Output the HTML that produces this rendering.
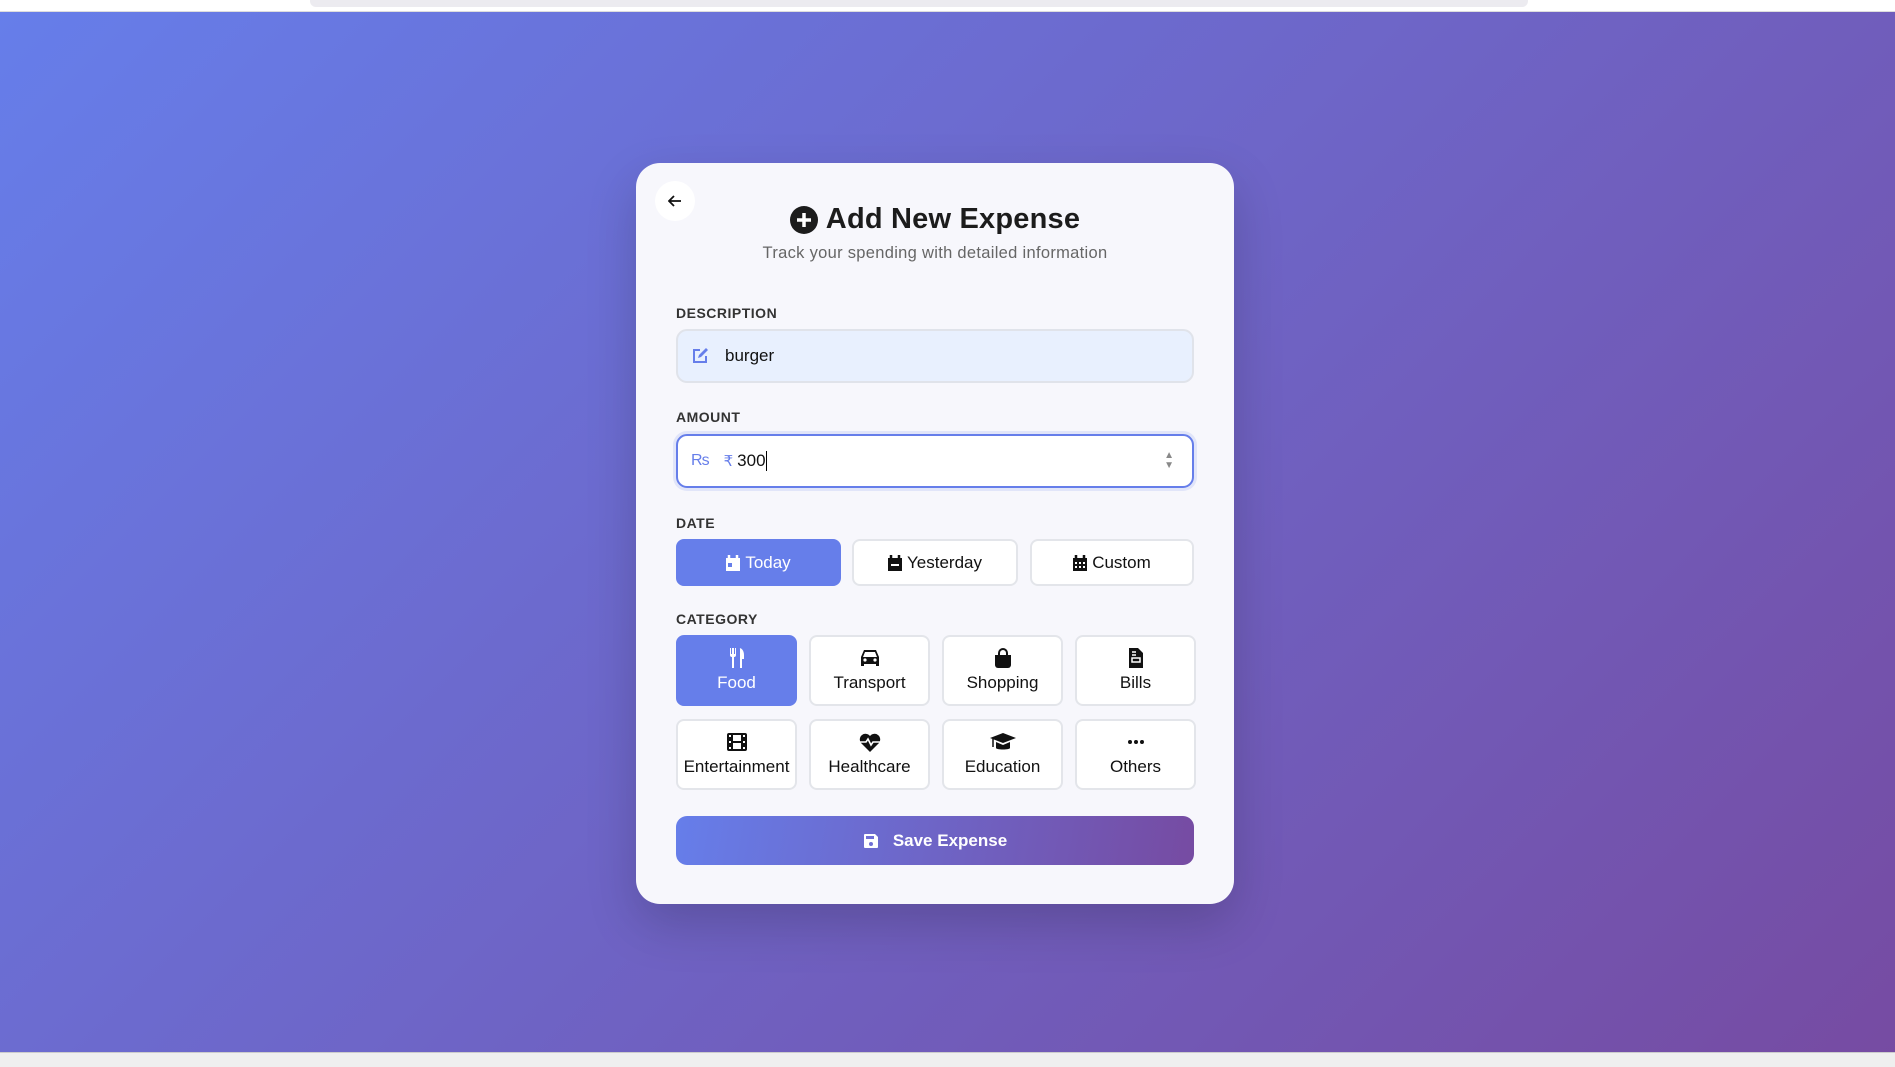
<!DOCTYPE html>
<html><head><meta charset="utf-8"><style>
*{box-sizing:border-box;margin:0;padding:0}
body{width:1895px;height:1067px;overflow:hidden;font-family:"Liberation Sans",sans-serif;background:linear-gradient(135deg,#667eea 0%,#764ba2 100%);position:relative}
.top{position:absolute;left:0;top:0;width:1895px;height:12px;background:#fff;border-bottom:1px solid #ddd}
.top div{position:absolute;left:310px;top:0;width:1218px;height:7px;background:#ecebf0;border-radius:0 0 6px 6px}
.task{position:absolute;left:0;top:1052px;width:1895px;height:15px;background:#efefef;border-top:1px solid #ccc}
.card{position:absolute;left:636px;top:163px;width:598px;height:741px;background:#f7f7fc;border-radius:24px;box-shadow:0 20px 50px rgba(0,0,0,.18)}
.back{position:absolute;left:19px;top:18px;width:40px;height:40px;border-radius:50%;background:#fff;display:flex;align-items:center;justify-content:center}
h1{position:absolute;left:0;right:0;top:40px;text-align:center;font-size:29px;font-weight:700;color:#1c1c1c;display:flex;justify-content:center;align-items:center;gap:8px;letter-spacing:.2px}
.sub{position:absolute;left:0;right:0;top:81px;text-align:center;font-size:16.5px;color:#666;letter-spacing:.3px}
.lbl{position:absolute;left:40px;font-size:14px;font-weight:700;color:#333;letter-spacing:.5px}
.inp{position:absolute;left:40px;width:518px;height:54px;border-radius:11px;display:flex;align-items:center;font-size:17px;color:#111}
.btn{position:absolute;height:47px;border-radius:8px;background:#fff;border:2px solid #e3e5ea;display:flex;align-items:center;justify-content:center;gap:5px;font-size:17px;color:#111}
.tile{position:absolute;width:121px;height:71px;border-radius:8px;background:#fff;border:2px solid #e3e5ea;display:flex;flex-direction:column;align-items:center;justify-content:center;gap:5px;font-size:17px;color:#111}
.card .on{background:#667eea;border-color:#667eea;color:#fff}
.tile svg{height:20px}
.save{position:absolute;left:40px;top:653px;width:518px;height:49px;border-radius:11px;background:linear-gradient(100deg,#667eea,#764ba2);color:#fff;font-weight:700;font-size:17px;display:flex;align-items:center;justify-content:center;gap:14px}
</style></head><body>
<div class="top"><div></div></div>
<div class="card">
<div class="back"><svg width="14" height="12" viewBox="0 0 14 12"><path d="M13 6H2M6 1L1 6l5 5" stroke="#111" stroke-width="1.8" fill="none"/></svg></div>
<h1><svg width="28" height="28" viewBox="0 0 28 28"><circle cx="14" cy="14" r="14" fill="#1c1c1c"/><path d="M14 7v14M7 14h14" stroke="#fff" stroke-width="3.5"/></svg>Add New Expense</h1>
<div class="sub">Track your spending with detailed information</div>
<div class="lbl" style="top:142px">DESCRIPTION</div>
<div class="inp" style="top:166px;background:#e8f0fe;border:2px solid #e0e3ea;padding-left:13px">
<svg width="18" height="18" viewBox="0 0 18 18"><path d="M9 3H3v12h12V9" stroke="#667eea" stroke-width="2" fill="none"/><path d="M7 11l1-3 7-7 2 2-7 7z" fill="#667eea"/></svg><span style="margin-left:16px">burger</span></div>
<div class="lbl" style="top:246px">AMOUNT</div>
<div class="inp" style="top:271px;background:#fff;border:2px solid #667eea;box-shadow:0 0 0 3px rgba(102,126,234,.15);padding-left:13px">
<span style="color:#667eea;font-size:16px">₨</span><span style="color:#667eea;margin-left:14px;font-size:15px">₹</span><span style="margin-left:4px">300</span><span style="border-left:1px solid #000;height:20px"></span>
<span style="position:absolute;right:18px;top:15px;font-size:10px;color:#888;line-height:10px">▲<br>▼</span></div>
<div class="lbl" style="top:352px">DATE</div>
<div class="btn on" style="left:40px;top:376px;width:165px"><svg width="14" height="16" viewBox="0 0 14 16"><path d="M0 3h14v13H0z" fill="#fff"/><path d="M3 0v4M11 0v4" stroke="#fff" stroke-width="2.5"/><rect x="2" y="8" width="4" height="4" fill="#667eea"/></svg>Today</div>
<div class="btn" style="left:216px;top:376px;width:166px"><svg width="14" height="16" viewBox="0 0 14 16"><path d="M0 3h14v13H0z" fill="#111"/><path d="M3 0v4M11 0v4" stroke="#111" stroke-width="2.5"/><rect x="3" y="9" width="8" height="2" fill="#fff"/></svg>Yesterday</div>
<div class="btn" style="left:394px;top:376px;width:164px"><svg width="14" height="16" viewBox="0 0 14 16"><path d="M0 3h14v13H0z" fill="#111"/><path d="M3 0v4M11 0v4" stroke="#111" stroke-width="2.5"/><path d="M2 7h2v2H2zM6 7h2v2H6zM10 7h2v2h-2zM2 11h2v2H2zM6 11h2v2H6zM10 11h2v2h-2z" fill="#fff"/></svg>Custom</div>
<div class="lbl" style="top:448px">CATEGORY</div>
<div class="tile on" style="left:40px;top:472px"><svg viewBox="0 0 16 20" width="16"><path d="M1 0v7a2 2 0 002 2v11h2V9a2 2 0 002-2V0H6v6H5V0H3v6H2V0z M10 0c3 0 5 3 5 7v4h-2v9h-2V0z" fill="#fff"/></svg>Food</div>
<div class="tile" style="left:173px;top:472px"><svg viewBox="0 0 22 20" width="22"><path d="M5 2h12l3 7v9h-3v-2H5v2H2V9z" fill="#111"/><path d="M6 4h10l2 5H4z" fill="#fff"/><circle cx="6" cy="12" r="1.6" fill="#fff"/><circle cx="16" cy="12" r="1.6" fill="#fff"/></svg>Transport</div>
<div class="tile" style="left:306px;top:472px"><svg viewBox="0 0 18 20" width="18"><path d="M5 7V5a4 4 0 018 0v2" stroke="#111" stroke-width="2" fill="none"/><path d="M1 7h16v10a3 3 0 01-3 3H4a3 3 0 01-3-3z" fill="#111"/></svg>Shopping</div>
<div class="tile" style="left:439px;top:472px"><svg viewBox="0 0 16 20" width="16"><path d="M1 0h9l5 5v15H1z" fill="#111"/><path d="M4 4h4M4 7h4" stroke="#fff" stroke-width="1.5"/><rect x="4" y="10" width="8" height="4" stroke="#fff" stroke-width="1.5" fill="none"/></svg>Bills</div>
<div class="tile" style="left:40px;top:556px"><svg viewBox="0 0 20 20" width="20"><rect x="0" y="1" width="20" height="18" rx="2" fill="#111"/><path d="M2 3h2v2H2zM2 9h2v2H2zM2 15h2v2H2zM16 3h2v2h-2zM16 9h2v2h-2zM16 15h2v2h-2zM6 3h8v6H6zM6 11h8v6H6z" fill="#fff"/></svg>Entertainment</div>
<div class="tile" style="left:173px;top:556px"><svg viewBox="0 0 22 20" width="22"><path d="M11 20L2 11A5.5 5.5 0 0111 4a5.5 5.5 0 019 7z" fill="#111"/><path d="M1 10h6l2-3 3 6 2-3h7" stroke="#fff" stroke-width="1.6" fill="none"/></svg>Healthcare</div>
<div class="tile" style="left:306px;top:556px"><svg viewBox="0 0 26 20" width="26"><path d="M13 1L0 6l13 5 13-5z" fill="#111"/><path d="M6 10v6c0 2 14 2 14 0v-6l-7 3z" fill="#111"/><path d="M3 7v8" stroke="#111" stroke-width="1.5"/></svg>Education</div>
<div class="tile" style="left:439px;top:556px"><svg viewBox="0 0 18 20" width="18"><circle cx="3" cy="10" r="2" fill="#111"/><circle cx="9" cy="10" r="2" fill="#111"/><circle cx="15" cy="10" r="2" fill="#111"/></svg>Others</div>
<div class="save"><svg width="16" height="16" viewBox="0 0 16 16"><path d="M1 2a1 1 0 011-1h10l3 3v10a1 1 0 01-1 1H2a1 1 0 01-1-1z" fill="#fff"/><rect x="3" y="3" width="8" height="3" fill="#6f6fd6"/><circle cx="8" cy="11" r="2" fill="#6f6fd6"/></svg>Save Expense</div>
</div>
<div class="task"></div>
</body></html>
